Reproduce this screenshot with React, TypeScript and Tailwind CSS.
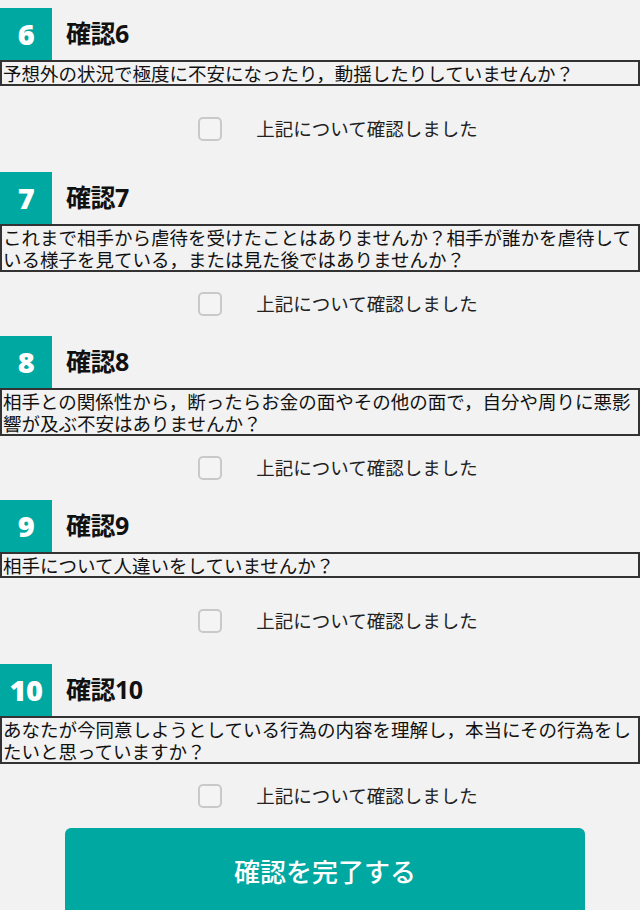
import React from "react";

const items = [
  { n: "6", q: "予想外の状況で極度に不安になったり，動揺したりしていませんか？" },
  { n: "7", q: "これまで相手から虐待を受けたことはありませんか？相手が誰かを虐待している様子を見ている，または見た後ではありませんか？" },
  { n: "8", q: "相手との関係性から，断ったらお金の面やその他の面で，自分や周りに悪影響が及ぶ不安はありませんか？" },
  { n: "9", q: "相手について人違いをしていませんか？" },
  { n: "10", q: "あなたが今同意しようとしている行為の内容を理解し，本当にその行為をしたいと思っていますか？" },
];

const cjk = '"Noto Sans CJK JP", "Noto Sans", sans-serif';
const head = '"Open Sans", "Noto Sans CJK JP", sans-serif';

export default function App() {
  return (
    <div
      className="min-h-[910px] w-[640px] bg-[#f2f2f2] pt-[8px] overflow-hidden"
      style={{ fontFamily: cjk }}
    >
      {items.map((it) => (
        <section key={it.n}>
          <div className="flex items-center h-[52px]">
            <div
              className="w-[52px] h-[52px] bg-[#00a8a2] flex items-center justify-center text-white font-extrabold text-[29px] tracking-[-0.5px]"
              style={{ fontFamily: head }}
            >
              {it.n}
            </div>
            <div
              className="ml-[14px] text-[25px] font-bold text-[#111] tracking-[-0.5px]"
              style={{ fontFamily: head }}
            >
              確認{it.n}
            </div>
          </div>
          <div className="h-[112px] flex flex-col">
            <div className="border-2 border-[#333] text-[18.5px] leading-[22px] text-[#111] pl-[1px]">
              {it.q}
            </div>
            <div className="flex-1 flex items-center justify-center pl-[36px]">
              <div className="w-[24px] h-[24px] rounded-[5px] border-2 border-[#c9c9c9] bg-[#f4f4f4]" />
              <span className="ml-[34px] text-[18.5px] text-[#222]">上記について確認しました</span>
            </div>
          </div>
        </section>
      ))}
      <div className="flex">
        <button className="ml-[65px] w-[520px] h-[90px] bg-[#00a8a2] rounded-t-[6px] text-white text-[26px] font-medium pb-[6px]">
          確認を完了する
        </button>
      </div>
    </div>
  );
}
